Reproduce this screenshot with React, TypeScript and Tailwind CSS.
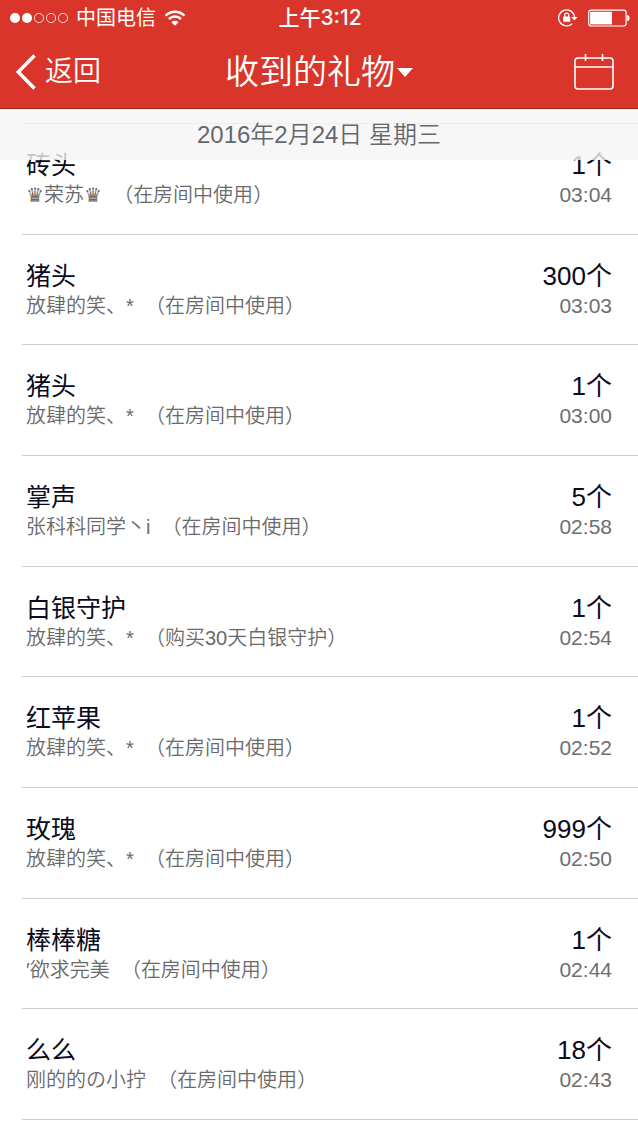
interface Gift {
  name: string
  count: number
  from: string
  note: string
  time: string
}

const GIFTS: Gift[] = [
  { name: '砖头', count: 1, from: '♛荣苏♛', note: '在房间中使用', time: '03:04' },
  { name: '猪头', count: 300, from: '放肆的笑、*', note: '在房间中使用', time: '03:03' },
  { name: '猪头', count: 1, from: '放肆的笑、*', note: '在房间中使用', time: '03:00' },
  { name: '掌声', count: 5, from: '张科科同学丶i', note: '在房间中使用', time: '02:58' },
  { name: '白银守护', count: 1, from: '放肆的笑、*', note: '购买30天白银守护', time: '02:54' },
  { name: '红苹果', count: 1, from: '放肆的笑、*', note: '在房间中使用', time: '02:52' },
  { name: '玫瑰', count: 999, from: '放肆的笑、*', note: '在房间中使用', time: '02:50' },
  { name: '棒棒糖', count: 1, from: '′欲求完美', note: '在房间中使用', time: '02:44' },
  { name: '么么', count: 18, from: '刚的的の小拧', note: '在房间中使用', time: '02:43' },
]

function SignalDots() {
  return (
    <svg width="58" height="12" viewBox="0 0 58 12" aria-hidden="true">
      <circle cx="5" cy="6" r="5" fill="#fff" />
      <circle cx="17" cy="6" r="5" fill="#fff" />
      <circle cx="29" cy="6" r="4.6" fill="none" stroke="#fff" strokeWidth="0.8" />
      <circle cx="41" cy="6" r="4.6" fill="none" stroke="#fff" strokeWidth="0.8" />
      <circle cx="53" cy="6" r="4.6" fill="none" stroke="#fff" strokeWidth="0.8" />
    </svg>
  )
}

function WifiIcon() {
  return (
    <svg width="22" height="16" viewBox="0 0 22 16" fill="none" stroke="#fff" strokeWidth="2.5" aria-hidden="true">
      <path d="M1.6 5.6a13.3 13.3 0 0 1 18.8 0" />
      <path d="M5 9a8.5 8.5 0 0 1 12 0" />
      <path d="M11 15.8l-3.6-3.5a5.1 5.1 0 0 1 7.2 0z" fill="#fff" stroke="none" />
    </svg>
  )
}

function RotationLock() {
  return (
    <svg width="20" height="18" viewBox="0 0 20 18" aria-hidden="true">
      <path d="M14.3 14.6A8 8 0 1 1 16.6 8" fill="none" stroke="#fff" strokeWidth="1.3" />
      <path d="M13.2 8h6.4l-3.2 3.6z" fill="#fff" />
      <rect x="5.2" y="7.6" width="7" height="5.2" rx="0.6" fill="#fff" />
      <path d="M6.7 8V6.2a2 2 0 0 1 4 0V8" fill="none" stroke="#fff" strokeWidth="1.3" />
    </svg>
  )
}

function Battery() {
  return (
    <svg width="42" height="18" viewBox="0 0 42 18" aria-hidden="true">
      <rect x="0.7" y="1.2" width="37.4" height="15.8" rx="2.4" fill="none" stroke="#fff" strokeWidth="1.2" />
      <rect x="2.2" y="2.8" width="21.8" height="12.6" fill="#fff" />
      <path d="M39.2 6c1.6.2 2.4 1.4 2.4 3.1s-.8 2.9-2.4 3.1z" fill="#fff" />
    </svg>
  )
}

function CalendarIcon() {
  return (
    <svg width="40" height="36" viewBox="0 0 40 36" fill="none" stroke="#fff" strokeWidth="1.6" aria-hidden="true">
      <rect x="1" y="4" width="38" height="31" rx="3" />
      <path d="M1 13h38M11.5 0v7M28.5 0v7" />
    </svg>
  )
}

function StatusBar() {
  return (
    <div className="grid h-9 grid-cols-3 items-center pr-2 pl-2.5 text-xl text-white">
      <div className="flex items-center gap-2">
        <SignalDots />
        <span>中国电信</span>
        <WifiIcon />
      </div>
      <div className="text-center font-[Inter,'Noto_Sans_CJK_SC',sans-serif] text-[21px] font-medium">上午3:12</div>
      <div className="flex items-center justify-end gap-2.5">
        <RotationLock />
        <Battery />
      </div>
    </div>
  )
}

function NavBar() {
  return (
    <div className="grid h-[72px] grid-cols-[1fr_auto_1fr] items-center px-4 font-[350] text-white">
      <a href="#back" className="flex items-center gap-2 text-[28px]">
        <svg width="21" height="36" viewBox="0 0 21 36" fill="none" stroke="#fff" strokeWidth="3.6" aria-hidden="true">
          <path d="M18.5 1.5L2.2 18l16.3 16.5" />
        </svg>
        返回
      </a>
      <button type="button" className="flex items-center gap-0.5 text-[34px]">
        收到的礼物
        <svg width="16" height="9" viewBox="0 0 16 9" aria-hidden="true">
          <path d="M0 0h16L8 9z" fill="#fff" />
        </svg>
      </button>
      <button type="button" aria-label="选择日期" className="mr-2 justify-self-end">
        <CalendarIcon />
      </button>
    </div>
  )
}

function GiftRow({ gift }: { gift: Gift }) {
  return (
    <li className="flex flex-1 justify-between border-b border-[#cdcdcd] pt-[26px] pr-[26px] pb-5 pl-1">
      <div>
        <h3 className="text-[25px] leading-[30px] text-[#0a0a20]">{gift.name}</h3>
        <p className="text-xl leading-[30px] font-[350] whitespace-pre text-[#6a6a6a]">
          {gift.from}
          {'  '}（{gift.note}）
        </p>
      </div>
      <div className="text-right">
        <div className="text-[26px] leading-[30px] text-[#0a0a20]">{gift.count}个</div>
        <time className="block text-[21px] leading-[30px] text-[#6e6e6e]">{gift.time}</time>
      </div>
    </li>
  )
}

export default function App() {
  return (
    <div
      lang="zh-CN"
      className="flex min-h-screen flex-col bg-white pb-4 font-['Liberation_Sans','Noto_Sans_CJK_SC','DejaVu_Sans',sans-serif]"
    >
      <header className="border-b border-[#9c1f18] bg-[#d9352a]">
        <StatusBar />
        <NavBar />
      </header>

      {/* 日期栏半透明，压在列表上方 */}
      <h2 className="z-10 h-[51px] bg-[#f5f5f5]/80 text-center text-2xl leading-[52px] font-[350] text-[#66676e]">
        2016年2月24日 星期三
      </h2>

      <ul className="-mt-[37px] ml-[22px] flex flex-1 flex-col border-t border-[#cdcdcd]">
        {GIFTS.map((gift) => (
          <GiftRow key={gift.time} gift={gift} />
        ))}
      </ul>
    </div>
  )
}
